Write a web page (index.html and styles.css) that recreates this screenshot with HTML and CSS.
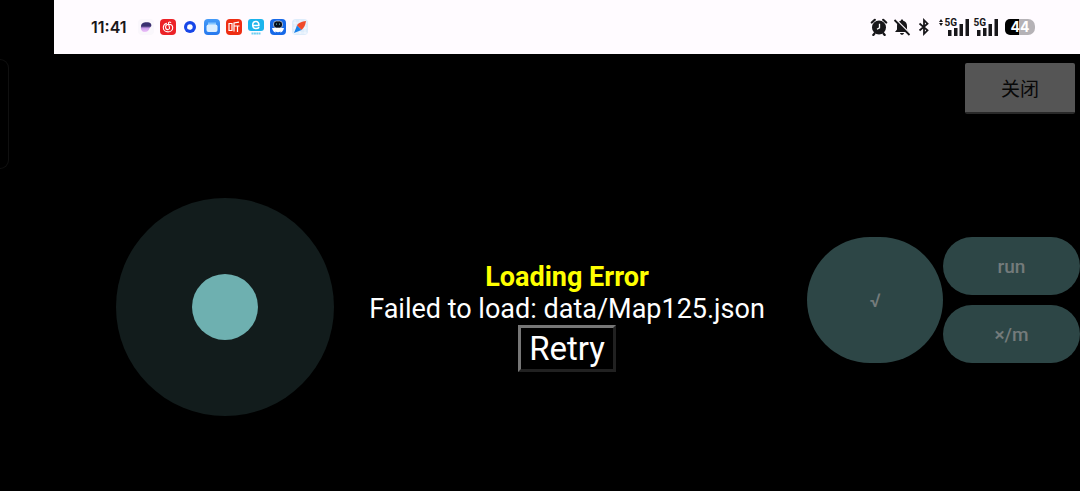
FILE: index.html
```html
<!DOCTYPE html>
<html lang="zh-CN">
<head>
<meta charset="utf-8">
<meta name="viewport" content="width=device-width, initial-scale=1">
<title>Loading Error</title>
<link rel="stylesheet" href="styles.css">
</head>
<body>
<div class="edge-handle"></div>
<div class="screen">
  <header class="status">
    <time class="clock">11:41</time>
    <div class="apps">
      <svg class="app" viewBox="0 0 16 16"><defs><linearGradient id="p" x1="0" y1="0" x2="0" y2="1"><stop offset=".4" stop-color="#39306f"/><stop offset=".6" stop-color="#c99bea"/><stop offset="1" stop-color="#f0c5fa"/></linearGradient></defs><rect width="16" height="16" rx="4" fill="#faf7fc"/><path d="M3 7.500C3 4 6 3 9 3.200c3 0 4.800 1.500 4.300 3.800-.3 1-1 1.200-1.600 2-1 2.500-2.200 4-4.700 4-3 0-4.500-2-4-5.500z" fill="url(#p)"/></svg>
      <svg class="app" viewBox="0 0 16 16"><rect width="16" height="16" rx="4" fill="#ec2228"/><path d="M6.500 4.200C4.500 5 3.300 6.600 3.300 8.500c0 2.500 2 4.400 4.700 4.400s4.700-1.800 4.700-4.200c0-2-1.700-3.500-4-3.500S5.600 6.600 5.600 8.300c0 1.300.9 2.300 2.100 2.300s2-.9 1.800-2.100L8.500 4.600c-.3-1.300 1-2 2.200-1.200" fill="none" stroke="#fff" stroke-width="1.100" stroke-linecap="round"/></svg>
      <svg class="app" viewBox="0 0 16 16"><circle cx="8" cy="8" r="6" fill="#1746e8"/><path d="M8 5.200a2.800 2.800 0 1 1-2.500 4.100L4.800 11l.4-3A2.800 2.800 0 0 1 8 5.200z" fill="#fff"/></svg>
      <svg class="app" viewBox="0 0 16 16"><defs><linearGradient id="f" x1="0" y1="0" x2="0" y2="1"><stop stop-color="#449af8"/><stop offset="1" stop-color="#2678ee"/></linearGradient></defs><rect width="16" height="16" rx="4" fill="url(#f)"/><path d="M4 3.500h8v4H4z" fill="#83c4ff"/><rect x="2.500" y="5.500" width="11" height="7.500" rx="2" fill="#dceeff"/></svg>
      <svg class="app" viewBox="0 0 16 16"><rect width="16" height="16" rx="4" fill="#ee2d13"/><path d="M3 4.500h3v7H3zM8 12.500V4l5-.8M8 7h5.500M11.500 7v6" fill="none" stroke="#fff" stroke-width="1.200"/></svg>
      <svg class="app" viewBox="0 0 16 16"><rect width="16" height="12" rx="3" fill="#1bb4ec"/><path d="M5 6.400h5.900C11 4 9.700 2.500 8 2.500S4.700 3.900 4.700 6s1.400 3.600 3.500 3.600c1.300 0 2.200-.4 3-1.300" fill="none" stroke="#fff" stroke-width="1.500"/><path d="M3.500 14.500h9" stroke="#6fcff2" stroke-width="2" stroke-dasharray="2 .4"/></svg>
      <svg class="app" viewBox="0 0 16 16"><rect width="16" height="16" rx="4" fill="#1769e8"/><path d="M2 9h12c-.5 3-2.600 5-6 5s-5.500-2-6-5z" fill="#fff"/><rect x="3.500" y="2" width="9" height="7" rx="3" fill="#07101e" stroke="#fff" stroke-width=".6"/><path d="M6 5.500l1-.8M10 5.500l-1-.8" stroke="#6be4f0" stroke-width=".9"/><path d="M5.500 12.500q2.500 1.500 5 0V16h-5z" fill="#1769e8"/></svg>
      <svg class="app" viewBox="0 0 16 16"><rect width="16" height="16" rx="4" fill="#ddecfb"/><path d="M3 1v14M8 1v14M13 1v14M1 4h14M1 9h14M1 14h14" stroke="#fff" stroke-width=".6"/><path d="M14 2C10 2.500 6 4 5 6.500L9.500 11C12 9 13.500 6 14 2z" fill="#f04a2b"/><path d="M2 14L5 6.500 9.500 11z" fill="#1881e8"/></svg>
    </div>
    <div class="system">
      <svg class="sys" viewBox="0 0 18 18"><g fill="none" stroke="#18171a" stroke-width="2.200" stroke-linecap="round"><path d="M1.800 4.500l3-2.700M16.200 4.500l-3-2.700M4.500 15.500L3.300 17M13.500 15.500l1.200 1.500"/></g><circle cx="9" cy="9.500" r="7" fill="#18171a"/><path d="M9.500 5.800v4L7 11.300" fill="none" stroke="#fff" stroke-width="1.300"/></svg>
      <svg class="sys" viewBox="0 0 18 18"><path d="M9 1.500c.8 0 1.200.5 1.200 1.200C13 3.500 14 5.500 14 8v3.500l2 2.500H2l2-2.500V8c0-2.500 1-4.500 3.800-5.300 0-.7.400-1.200 1.200-1.200zM7 15h4c-.2 1.200-1 1.800-2 1.800S7.200 16.200 7 15z" fill="#18171a"/><path d="M2.500 1l15 15" stroke="#fffbff" stroke-width="1.500"/><path d="M1.500 2l15 15" stroke="#18171a" stroke-width="1.800"/></svg>
      <svg class="sys" viewBox="0 0 18 18"><path d="M3.500 5.500l8 6.800L8 15.800V2.200l3.500 3.500-8 6.800" fill="none" stroke="#18171a" stroke-width="1.800"/></svg>
      <div class="signal wide">
        <svg class="updown" viewBox="0 0 4 7"><path d="M0 3l2-3 2 3zM0 4l2 3 2-3z" fill="#18171a"/></svg>
        <span class="net">5G</span>
        <svg class="bars" viewBox="0 0 21 17"><path d="M0 11h3.500v6H0zM6 9h3.500v8H6zM11.500 5H15v12h-3.500zM17.500 0H21v17h-3.500z" fill="#18171a"/></svg>
      </div>
      <div class="signal">
        <span class="net">5G</span>
        <svg class="bars" viewBox="0 0 21 17"><path d="M0 11h3.500v6H0zM6 9h3.500v8H6zM11.500 5H15v12h-3.500zM17.500 0H21v17h-3.500z" fill="#18171a"/></svg>
      </div>
      <div class="battery"><span class="charge">44</span></div>
    </div>
  </header>
  <div class="toolbar"><button class="close" type="button">关闭</button></div>
  <main class="stage">
    <div class="stick"><div class="knob"></div></div>
    <section class="message">
      <h1 class="title">Loading Error</h1>
      <p class="detail">Failed to load: data/Map125.json</p>
      <button class="retry" type="button">Retry</button>
    </section>
    <div class="pad">
      <button class="key confirm" type="button">√</button>
      <button class="key" type="button">run</button>
      <button class="key" type="button">×/m</button>
    </div>
  </main>
</div>
</body>
</html>
```
FILE: styles.css
```css
* { box-sizing: border-box; }
body {
  margin: 0;
  background: #000;
  color: #fff;
  font-family: Roboto, "Noto Sans CJK SC", sans-serif;
}
button { font: inherit; cursor: pointer; }
.screen { margin-left: 54px; }

.edge-handle {
  position: absolute;
  top: 59px;
  left: 0;
  width: 9px;
  height: 110px;
  border: 1px solid #101010;
  border-left: 0;
  border-radius: 0 9px 9px 0;
}

.status {
  display: flex;
  align-items: center;
  height: 54px;
  padding: 0 45px 0 37px;
  background: #fffbff;
  color: #18171a;
}
.clock { width: 47px; font: 600 16px Inter, sans-serif; }
.apps { display: flex; gap: 6px; }
.app { width: 16px; height: 16px; }
.system { display: flex; align-items: center; gap: 5px; margin-left: auto; }
.sys { width: 18px; height: 18px; }
.signal { position: relative; width: 24px; height: 18px; }
.signal.wide { width: 30px; }
.bars { position: absolute; right: 0; bottom: 0; width: 21px; height: 17px; }
.net {
  position: absolute;
  top: 0;
  right: 12px;
  background: #fffbff;
  font-size: 10px;
  font-weight: 700;
  line-height: 9px;
  z-index: 1;
}
.updown { position: absolute; top: 1px; left: 0; width: 4px; height: 7px; }
.battery {
  width: 30px;
  height: 16px;
  margin-left: 2px;
  border-radius: 5px 7px 7px 5px;
  background: linear-gradient(90deg, #000 47%, #b5b2b6 47%);
  color: #fff;
  text-align: center;
}
.charge { display: block; font: 700 14px/16px Inter, sans-serif; }

.toolbar { display: flex; justify-content: flex-end; padding: 9px 5px 0; }
.close {
  width: 110px;
  height: 51px;
  padding: 0;
  border: 0;
  border-bottom: 2px solid #292929;
  border-radius: 2px;
  background: #555;
  color: #080808;
  font-size: 19px;
}

.stage {
  display: grid;
  grid-template-columns: 1fr auto 1fr;
  align-items: start;
  padding-top: 84px;
}
.stick {
  display: grid;
  place-items: center;
  width: 218px;
  height: 218px;
  margin-left: 62px;
  border-radius: 50%;
  background: #121c1c;
}
.knob { width: 66px; height: 66px; border-radius: 50%; background: #6eb0b0; }

.message { margin-top: 63px; text-align: center; }
.title, .detail { margin: 0; font-size: 27px; line-height: 32px; }
.title { color: #ff0; font-weight: 700; }
.retry {
  height: 47px;
  padding: 0 8px;
  border: 3px solid;
  border-color: #767676 #212121 #212121 #767676;
  background: #000;
  color: #fff;
  font-size: 33px;
  line-height: 40px;
}

.pad {
  display: grid;
  grid-template-columns: 136px 137px;
  grid-template-rows: 58px 58px;
  gap: 10px 0;
  justify-self: end;
  margin-top: 39px;
}
.key {
  padding: 0;
  border: 0;
  border-radius: 29px;
  background: #2d4646;
  color: #747b7b;
  font-size: 19px;
  font-weight: 500;
}
.confirm { grid-row: span 2; border-radius: 63px; }
```
